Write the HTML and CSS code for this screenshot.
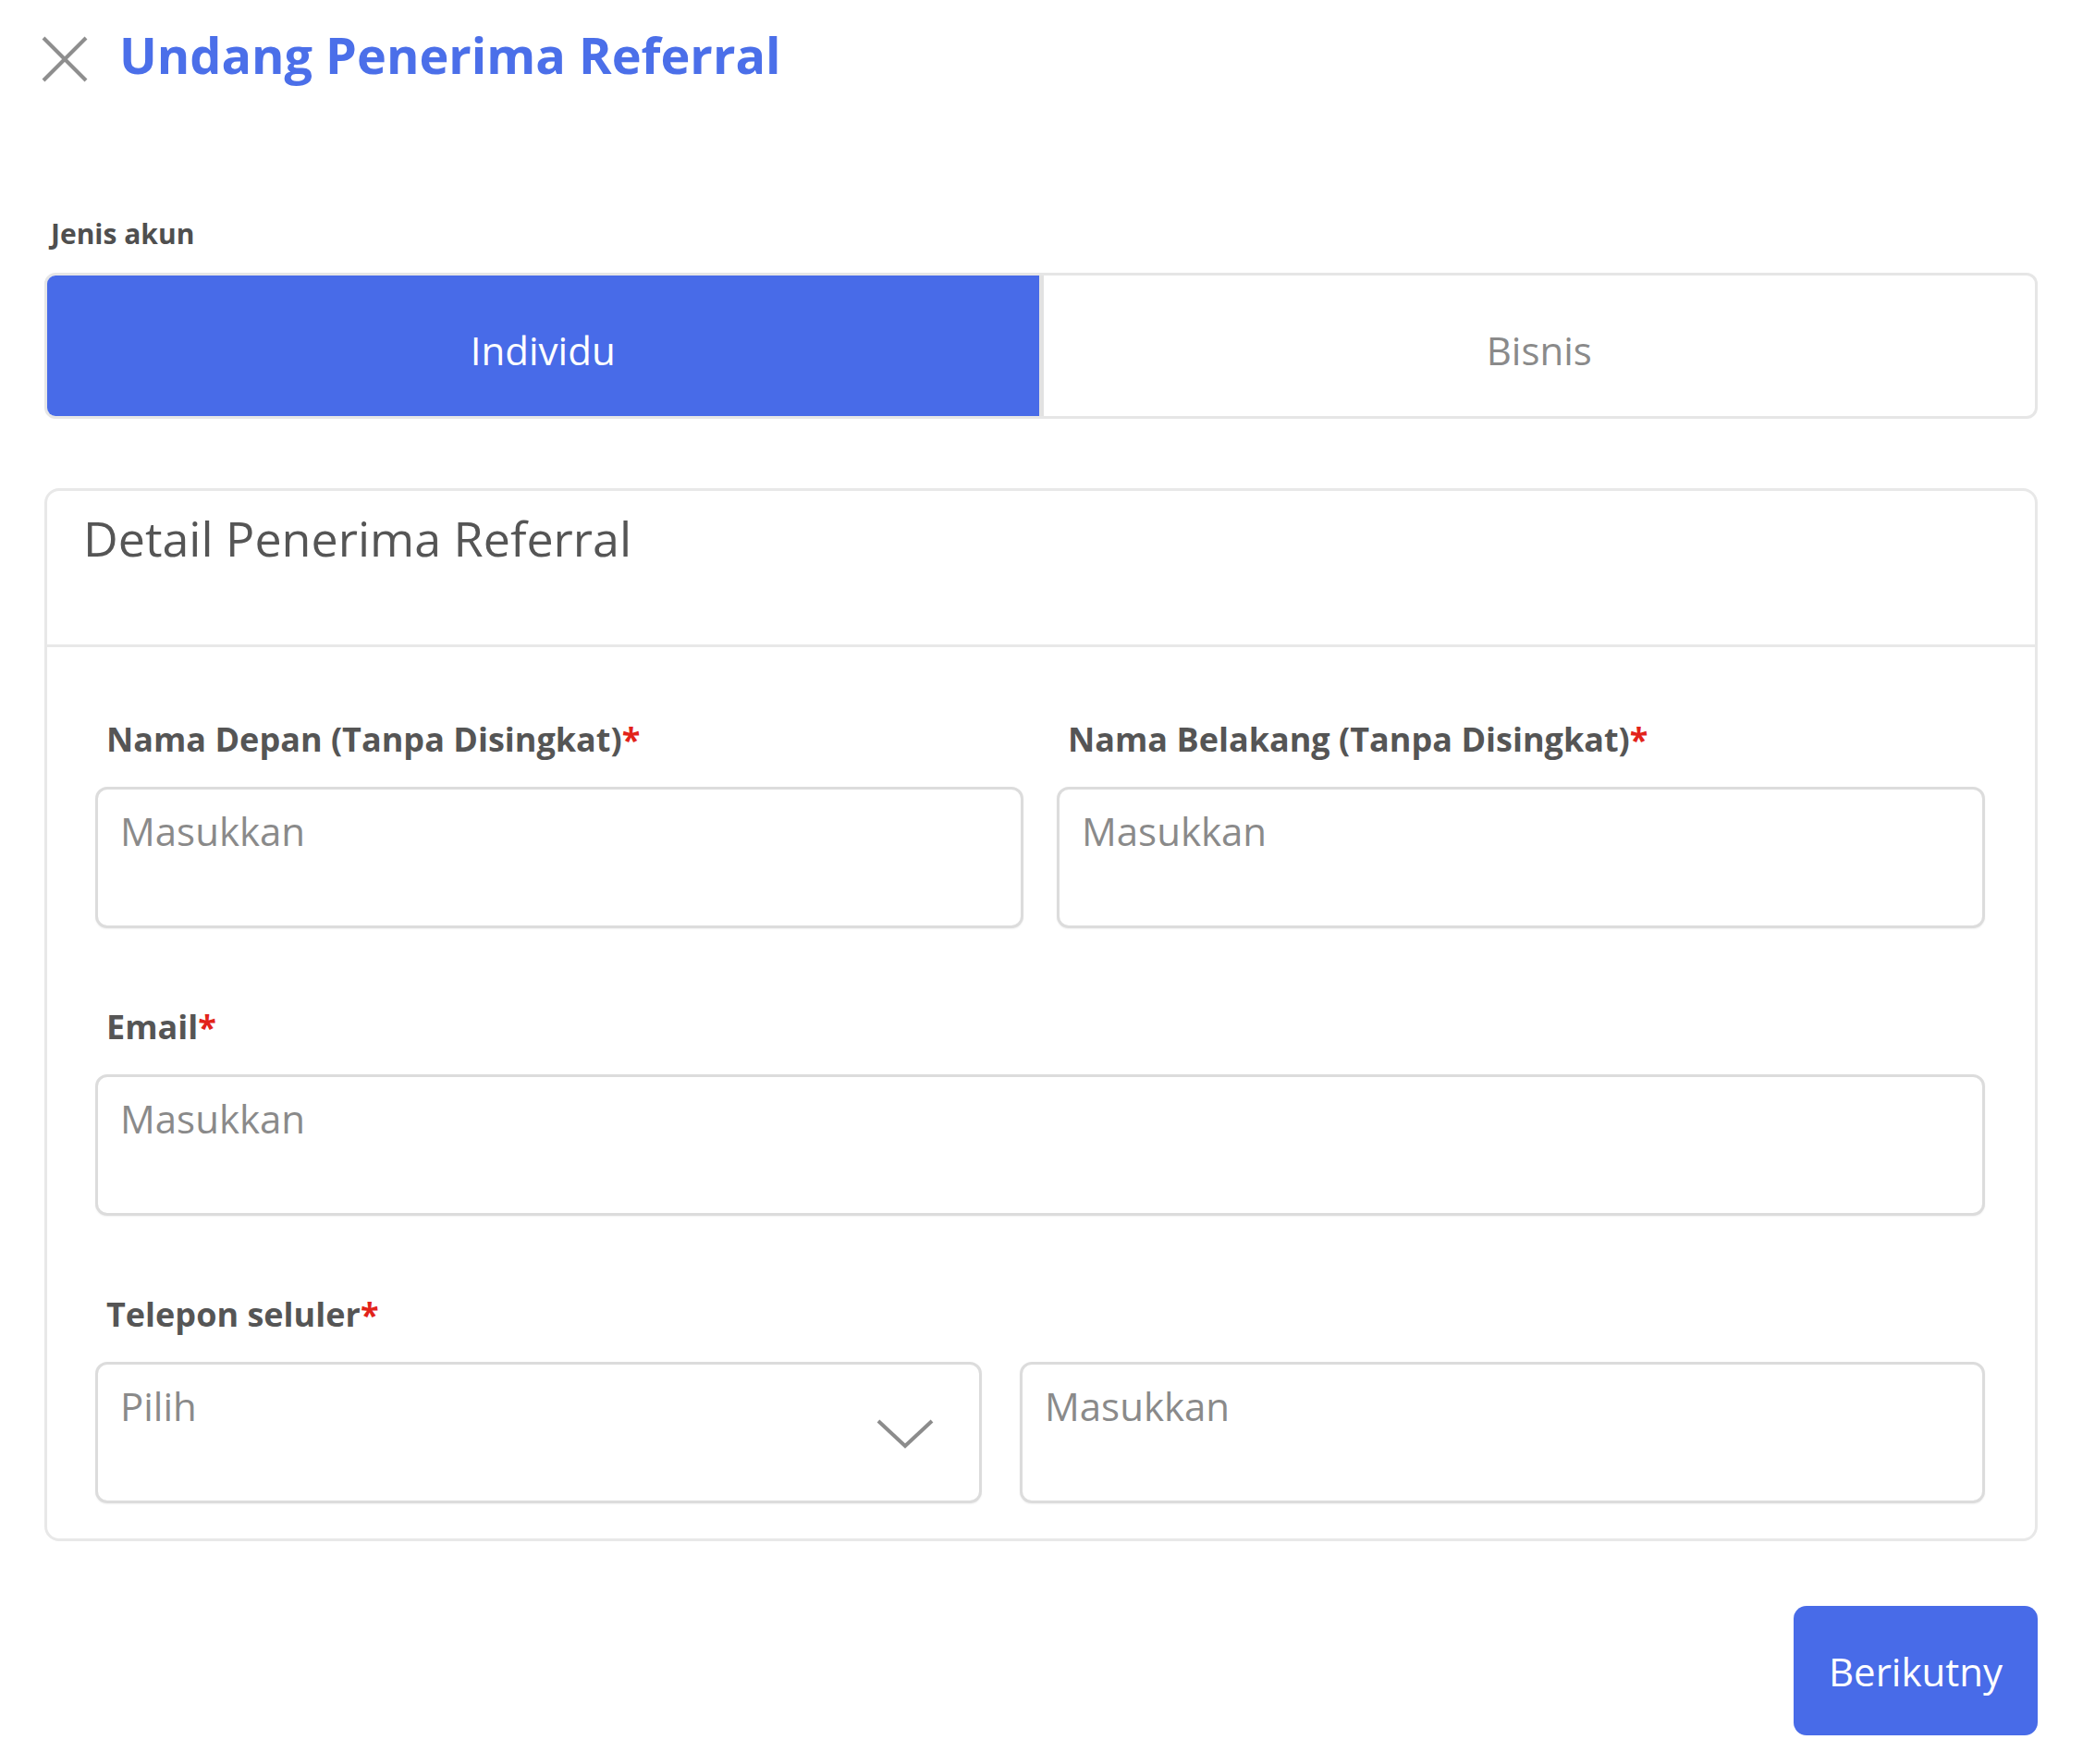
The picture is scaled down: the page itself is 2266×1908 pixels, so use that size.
FILE: index.html
```html
<!DOCTYPE html>
<html lang="id">

<head>
    <meta charset="UTF-8">
    <meta name="viewport" content="width=device-width, initial-scale=1.0">
    <title>Undang Penerima Referral</title>
    <link rel="stylesheet" href="styles.css">
</head>

<body>
    <div class="page">
        <div class="header">
            <svg class="close" width="50" height="50" viewBox="0 0 50 50">
                <line x1="2" y1="2" x2="48" y2="48" />
                <line x1="48" y1="2" x2="2" y2="48" />
            </svg>
            <h1 class="title">Undang Penerima Referral</h1>
        </div>

        <div class="label-small">Jenis akun</div>
        <div class="tabs">
            <div class="tab active">Individu</div>
            <div class="tab">Bisnis</div>
        </div>

        <div class="card">
            <div class="card-head">Detail Penerima Referral</div>
            <div class="card-body">
                <div class="row two">
                    <div class="field">
                        <label class="label">Nama Depan (Tanpa Disingkat)<span class="req">*</span></label>
                        <input class="input" type="text" placeholder="Masukkan">
                    </div>
                    <div class="field">
                        <label class="label">Nama Belakang (Tanpa Disingkat)<span class="req">*</span></label>
                        <input class="input" type="text" placeholder="Masukkan">
                    </div>
                </div>

                <div class="field">
                    <label class="label">Email<span class="req">*</span></label>
                    <input class="input" type="text" placeholder="Masukkan">
                </div>

                <div class="field">
                    <label class="label">Telepon seluler<span class="req">*</span></label>
                    <div class="row phone">
                        <div class="select">
                            <span>Pilih</span>
                            <svg class="chevron" width="64" height="34" viewBox="0 0 64 34">
                                <polyline points="3,3 32,30 61,3" />
                            </svg>
                        </div>
                        <input class="input" type="text" placeholder="Masukkan">
                    </div>
                </div>
            </div>
        </div>

        <div class="actions">
            <button class="next">Berikutny</button>
        </div>
    </div>
</body>

</html>
```

FILE: styles.css
```css
body {
    margin: 0;
    background-color: #fff;
    font-family: "Open Sans", "Noto Sans", sans-serif;
    color: #555;
}

.page {
    padding: 19px 62px 40px 48px;
}

/* header */
.header {
    display: flex;
    align-items: flex-start;
    gap: 34px;
}

.close {
    margin-top: 20px;
    margin-left: -3px;
    flex: none;
}

.close line {
    stroke: #8e8e8e;
    stroke-width: 4;
}

.title {
    margin: 0;
    font-size: 54px;
    line-height: 80px;
    font-weight: 700;
    color: #4b6fe9;
}

/* account type */
.label-small {
    margin-top: 133px;
    padding-left: 7px;
    font-size: 30px;
    font-weight: 700;
    color: #4f4f4f;
}

.tabs {
    display: flex;
    margin-top: 22px;
    height: 158px;
    box-sizing: border-box;
    border: 3px solid #e6e6e6;
    border-radius: 12px;
    overflow: hidden;
}

.tab {
    flex: 1;
    display: flex;
    align-items: center;
    justify-content: center;
    padding-top: 8px;
    font-size: 42px;
    color: #8a8a8a;
}

.tab.active {
    background-color: #486be8;
    color: #fff;
    border-right: 5px solid #e2e2e2;
}

/* card */
.card {
    margin-top: 75px;
    border: 3px solid #e8e8e8;
    border-radius: 16px;
}

.card-head {
    height: 136px;
    padding: 15px 38px 15px 39px;
    font-size: 52px;
    color: #555;
    border-bottom: 3px solid #e8e8e8;
}

.card-body {
    display: flex;
    flex-direction: column;
    gap: 82px;
    padding: 75px 54px 38px 52px;
}

.row {
    display: grid;
}

.row.two {
    grid-template-columns: 1fr 1fr;
    gap: 36px;
}

.row.phone {
    grid-template-columns: 959fr 1044fr;
    gap: 41px;
}

.field {
    display: flex;
    flex-direction: column;
    gap: 27px;
}

.label {
    padding-left: 12px;
    font-size: 36px;
    font-weight: 700;
    color: #555;
}

.req {
    color: #e2231a;
}

.input,
.select {
    box-sizing: border-box;
    width: 100%;
    height: 153px;
    margin: 0;
    border: 3px solid #dcdcdc;
    border-radius: 13px;
    box-shadow: 0 1px 2px rgba(0, 0, 0, 0.06);
    background-color: #fff;
    font-family: "Open Sans", "Noto Sans", sans-serif;
    font-size: 42px;
    color: #555;
}

.input {
    padding: 16px 24px 74px;
    outline: none;
}

.input::placeholder {
    color: #8a8a8a;
    opacity: 1;
}

.select {
    display: flex;
    justify-content: space-between;
    align-items: flex-start;
    padding: 16px 48px 0 24px;
    color: #8a8a8a;
}

.select span {
    line-height: 57px;
}

.chevron {
    align-self: center;
    margin-top: -14px;
}

.chevron polyline {
    fill: none;
    stroke: #8c8c8c;
    stroke-width: 4;
}

/* footer */
.actions {
    display: flex;
    justify-content: flex-end;
    margin-top: 70px;
}

.next {
    width: 264px;
    height: 140px;
    padding: 0;
    border: none;
    border-radius: 14px;
    background-color: #486be8;
    color: #fff;
    font-family: "Open Sans", "Noto Sans", sans-serif;
    font-size: 42px;
    white-space: nowrap;
    overflow: hidden;
}
```
